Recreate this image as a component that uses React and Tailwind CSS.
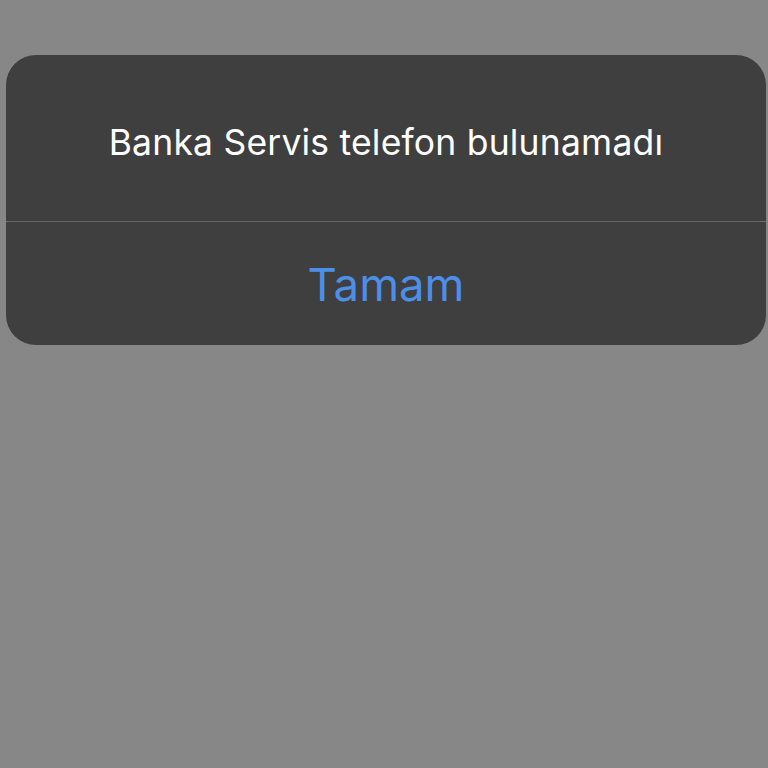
import React from "react";

const App = () => {
  return (
    <div className="w-[768px] h-[768px] bg-[#878787] pt-[55px] pl-[6px] pr-[2px]" style={{ fontFamily: 'Inter, "Noto Sans", sans-serif' }}>
      <div className="w-[760px] bg-[#3f3f3f] rounded-[30px] overflow-hidden">
        <div className="h-[166px] flex items-center justify-center pt-[10px]">
          <p className="text-[35.5px] text-white tracking-[0.2px]">Banka Servis telefon bulunamadı</p>
        </div>
        <div className="h-px bg-[#686868]" />
        <button className="w-full h-[123px] flex items-center justify-center pt-[4px]">
          <span className="text-[45.5px] text-[#4d8fe8]">Tamam</span>
        </button>
      </div>
    </div>
  );
};

export default App;
